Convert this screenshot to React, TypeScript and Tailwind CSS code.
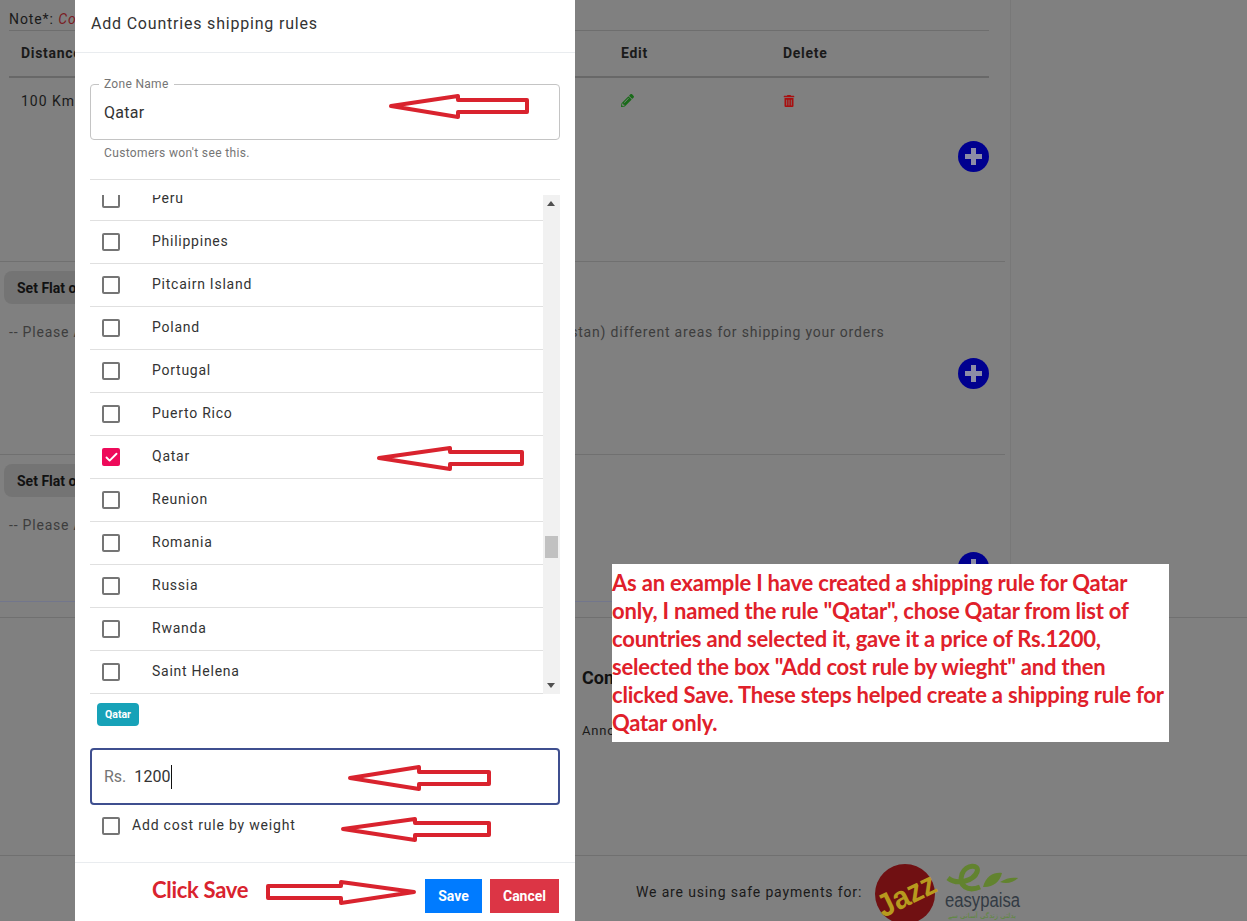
import { JSX } from "react";
import { Check } from "lucide-react";
import { FaPencilAlt, FaTrashAlt } from "react-icons/fa";

const countries = [
  "Peru", "Philippines", "Pitcairn Island", "Poland", "Portugal", "Puerto Rico",
  "Qatar", "Reunion", "Romania", "Russia", "Rwanda", "Saint Helena",
];

const noteLines = [
  "As an example I have created a shipping rule for Qatar",
  "only, I named the rule \"Qatar\", chose Qatar from list of",
  "countries and selected it, gave it a price of Rs.1200,",
  "selected the box \"Add cost rule by wieght\" and then",
  "clicked Save. These steps helped create a shipping rule for",
  "Qatar only.",
];

function PlusButton(): JSX.Element {
  return (
    <div className="flex h-[31px] w-[31px] items-center justify-center rounded-full bg-[#00008f]">
      <svg width="19" height="19" viewBox="0 0 19 19">
        <path d="M7 1h5v6h6v5h-6v6H7v-6H1V7h6z" fill="#8c8ca6" />
      </svg>
    </div>
  );
}

function Box({ checked }: { checked?: boolean }): JSX.Element {
  if (checked) {
    return (
      <span className="flex h-[18px] w-[18px] items-center justify-center rounded-[2px] bg-[#ee0a5a]">
        <Check size={15} strokeWidth={3} color="#ffffff" />
      </span>
    );
  }
  return <span className="block h-[18px] w-[18px] rounded-[2px] border-2 border-[#757575]" />;
}

function FlatSection({ height, plusTop, hint, border }: { height: string; plusTop: string; hint: string; border: string }): JSX.Element {
  return (
    <div className={`${height} ${border} border-b pt-[9px] pl-1`}>
      <div className="flex h-[33px] w-[300px] items-center rounded-lg bg-[#747474] pl-[13px] text-sm font-bold text-[#111111]">
        Set Flat or Distance rates
      </div>
      <p className="mt-[18px] ml-[5px] whitespace-nowrap text-sm tracking-[0.8px] text-[#3d3d3d]">{hint}</p>
      <div className={`${plusTop} flex justify-end pr-[16px]`}>
        <PlusButton />
      </div>
    </div>
  );
}

function PageBehind(): JSX.Element {
  return (
    <div className="h-[921px] w-[1247px] bg-[#808080] font-['Roboto',sans-serif] text-[#1a1a1a]">
      <div className="h-[617px] w-[1011px] border-r border-[#787878]">
        <div className="mr-[5px]">
          <div className="h-[262px] border-b border-[#707070] px-[9px]">
            <div className="h-[31px] w-[980px] border-b border-[#6e6e6e] pt-[9px] text-sm tracking-[0.9px]">
              Note*: <span className="italic text-[#7a1a22]">Cost rules</span>
            </div>
            <div className="flex h-[47px] w-[980px] items-center border-b-2 border-[#686868] pb-[2px] text-sm font-bold tracking-[0.7px]">
              <span className="w-[612px] pl-3">Distance</span>
              <span className="w-[162px]">Edit</span>
              <span>Delete</span>
            </div>
            <div className="flex h-[45px] w-[980px] items-center text-sm tracking-[1px]">
              <span className="w-[612px] pl-3">100 Km</span>
              <span className="w-[162px]">
                <FaPencilAlt size={13} color="#196b19" />
              </span>
              <FaTrashAlt size={12} color="#a80f0f" />
            </div>
            <div className="mt-[18px] flex w-[980px] justify-end">
              <PlusButton />
            </div>
          </div>
          <FlatSection
            height="h-[193px]"
            plusTop="mt-[16px]"
            border="border-[#707070]"
            hint="-- Please Add shipping rates and zones for your store locations in all of the (Pakistan) different areas for shipping your orders"
          />
          <FlatSection
            height="h-[147px]"
            plusTop="mt-[17px]"
            border="border-[#72768c]"
            hint="-- Please Add rates and zones"
          />
        </div>
      </div>
      <div className="h-[239px] border-y border-[#707070] pl-[582px]">
        <p className="pt-[46px] text-lg font-bold text-[#111111]">Contact Us</p>
        <p className="pt-[29px] text-[13px] tracking-[0.8px]">Announcements</p>
      </div>
      <div className="flex h-[65px] items-center pl-[636px]">
        <span className="mt-[6px] text-sm tracking-[0.85px]">We are using safe payments for:</span>
        <svg width="150" height="59" viewBox="0 0 150 59" className="mt-[6px] ml-[12px]">
          <circle cx="31" cy="32" r="30" fill="#701012" />
          <text x="1" y="44" fontFamily="Liberation Sans" fontWeight="700" fontSize="32" fill="#b89a1e" transform="rotate(-26 31 32)" textLength="62" lengthAdjust="spacingAndGlyphs">Jazz</text>
          <path d="M74 16C84 24 100 18 103 10C106 2 92 2 88 12C84 24 94 30 106 25" fill="none" stroke="#62832f" strokeWidth="5" />
          <path d="M109 25C112 14 120 10 128 11C126 20 118 26 109 25zM126 20C132 16 138 15 144 16C139 21 132 22 126 20z" fill="#62832f" />
          <text x="71" y="45" fontFamily="Liberation Sans" fontSize="20" fill="#333b44" textLength="75" lengthAdjust="spacingAndGlyphs">easypaisa</text>
          <text x="108" y="56" textAnchor="middle" fontFamily="DejaVu Sans" fontSize="7" fill="#5d8a3a">بدلتی زندگی آسانی سے</text>
        </svg>
      </div>
    </div>
  );
}

function ShippingModal(): JSX.Element {
  return (
    <div className="absolute top-0 left-[75px] flex h-[921px] w-[500px] flex-col bg-white font-['Roboto',sans-serif] text-[#333333]">
      <div className="flex h-[53px] shrink-0 items-center border-b border-[#e9ecef] pb-[5px] pl-4 text-base tracking-[0.8px]">
        Add Countries shipping rules
      </div>

      <div className="px-[15px]">
        <div className="relative mt-[31px] flex h-[56px] items-center rounded border border-[#c4c4c4] pt-[2px] pl-[13px] text-base tracking-[0.3px]">
          <span className="absolute -top-[9px] left-[8px] bg-white px-[5px] text-xs tracking-[0.3px] text-[#757575]">Zone Name</span>
          Qatar
        </div>
        <p className="mt-[5px] h-[35px] border-b border-[#e0e0e0] pl-[14px] text-xs leading-[16px] tracking-[0.35px] text-[#757575]">
          Customers won't see this.
        </p>

        <div className="mt-[15px] flex h-[499px] overflow-hidden">
          <div className="w-[453px] shrink-0">
            <div className="-mt-[17px]">
              {countries.map((name) => (
                <div key={name} className="flex h-[43px] items-center border-b border-[#e0e0e0] pl-[12px] text-sm tracking-[0.75px]">
                  <Box checked={name === "Qatar"} />
                  <span className="-mt-[2px] ml-[32px]">{name}</span>
                </div>
              ))}
            </div>
          </div>
          <div className="relative w-[17px] bg-[#f1f1f1]">
            <span className="absolute top-[6px] left-[4px] h-0 w-0 border-x-[4px] border-b-[5px] border-x-transparent border-b-[#505050]" />
            <span className="absolute top-[341px] left-[2px] h-[22px] w-[13px] bg-[#c1c1c1]" />
            <span className="absolute bottom-[6px] left-[4px] h-0 w-0 border-x-[4px] border-t-[5px] border-x-transparent border-t-[#505050]" />
          </div>
        </div>

        <div className="mt-[9px] ml-[7px] flex h-[23px] w-[42px] items-center justify-center rounded bg-[#17a2b8] text-[10.5px] font-bold text-white">
          Qatar
        </div>

        <div className="mt-[22px] flex h-[57px] items-center rounded border-2 border-[#3f4f8f] pl-[12px] text-base">
          <span className="text-[#757575]">Rs.</span>
          <span className="ml-[8px] border-r border-[#111111] tracking-[0.1px]">1200</span>
        </div>

        <div className="mt-[12px] flex h-[18px] items-center pl-[12px] text-sm tracking-[0.8px]">
          <Box />
          <span className="-mt-[2px] ml-[12px]">Add cost rule by weight</span>
        </div>
      </div>

      <div className="mt-[27px] flex h-[59px] items-start justify-end gap-[8px] border-t border-[#e9ecef] pt-[16px] pr-[16px] text-sm font-bold text-white">
        <button className="flex h-[34px] w-[57px] items-center justify-center bg-[#007bff]">Save</button>
        <button className="flex h-[34px] w-[69px] items-center justify-center bg-[#dc3545]">Cancel</button>
      </div>
    </div>
  );
}

function Arrows(): JSX.Element {
  const shapes = [
    "391,106 458,96 458,100 527,100 527,112 458,112 458,117",
    "379,458 450,448 450,452 522,452 522,464 450,464 450,469",
    "350,778 419,767 419,772 489,772 489,784 419,784 419,789",
    "343,829 415,819 415,823 489,823 489,835 415,835 415,840",
    "414,892 341,882 341,886 268,886 268,898 341,898 341,903",
  ];
  return (
    <svg className="pointer-events-none absolute top-0 left-0" width="1247" height="921" viewBox="0 0 1247 921">
      {shapes.map((points) => (
        <polygon key={points} points={points} fill="#ffffff" stroke="#d9232e" strokeWidth="4" strokeLinejoin="round" />
      ))}
    </svg>
  );
}

export default function App(): JSX.Element {
  return (
    <div className="relative h-[921px] w-[1247px] overflow-hidden">
      <PageBehind />
      <ShippingModal />
      <Arrows />
      <span className="absolute top-[876px] left-[152px] font-['Lato',sans-serif] text-[22px] leading-[28px] font-bold tracking-[-0.3px] text-[#d9232e]">
        Click Save
      </span>
      <div className="absolute top-[564px] left-[612px] h-[178px] w-[557px] bg-white pt-[5px] font-['Lato',sans-serif] text-[22px] leading-[28px] font-bold tracking-[-0.2px] whitespace-nowrap text-[#e0202a]">
        {noteLines.map((line) => (
          <div key={line}>{line}</div>
        ))}
      </div>
    </div>
  );
}
